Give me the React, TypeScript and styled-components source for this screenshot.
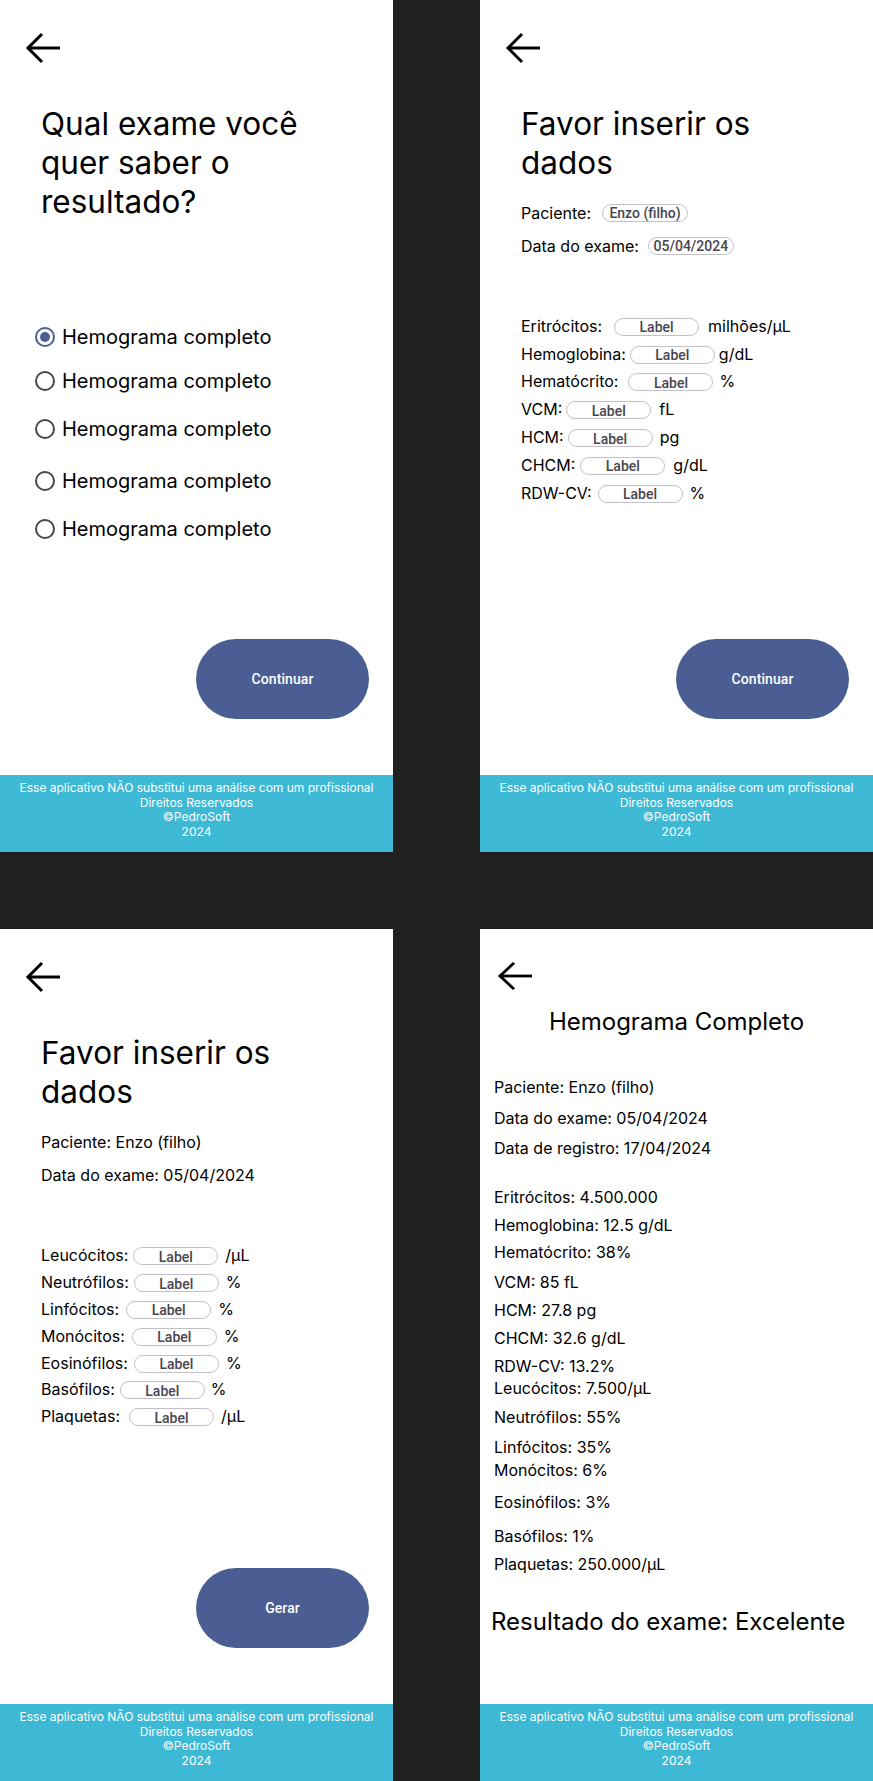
import React from "react";
import styled, { createGlobalStyle } from "styled-components";

const GlobalStyle = createGlobalStyle`
  html, body {
    margin: 0;
    padding: 0;
    background: #202020;
  }
  body {
    font-family: Inter, "Noto Sans", sans-serif;
    -webkit-font-smoothing: antialiased;
  }
  * { box-sizing: border-box; }
`;

const Board = styled.div`
  display: grid;
  grid-template-columns: 393px 393px;
  grid-template-rows: 852px 852px;
  column-gap: 87px;
  row-gap: 77px;
  width: 873px;
  background: #202020;
`;

const Screen = styled.section`
  display: flex;
  flex-direction: column;
  background: #ffffff;
  color: #000000;
  overflow: hidden;
`;

const BackButton = styled.button<{ $left: number }>`
  display: block;
  align-self: flex-start;
  margin: 32px 0 0 ${(p) => p.$left}px;
  padding: 0;
  border: 0;
  background: none;
  line-height: 0;
  cursor: pointer;
`;

const Title = styled.h1`
  margin: 40px 0 0;
  padding-left: 41px;
  max-width: 341px;
  font-size: 31.5px;
  line-height: 39px;
  font-weight: 400;
`;

const CenterTitle = styled.h1`
  margin: 16px 0 0;
  text-align: center;
  font-size: 24px;
  line-height: 30px;
  font-weight: 400;
`;

const RadioList = styled.div`
  display: flex;
  flex-direction: column;
  margin-top: 104px;
  padding-left: 35px;
`;

const RadioRow = styled.label<{ $mt: number }>`
  display: flex;
  align-items: center;
  gap: 7px;
  height: 24px;
  margin-top: ${(p) => p.$mt}px;
  font-size: 20px;
  line-height: 24px;
  cursor: pointer;
`;

const RadioInput = styled.input`
  appearance: none;
  -webkit-appearance: none;
  margin: 0;
  width: 20px;
  height: 20px;
  border-radius: 50%;
  border: 2px solid #49454f;
  display: grid;
  place-items: center;
  flex: none;
  &:checked {
    border-color: #4a5e93;
  }
  &:checked::after {
    content: "";
    width: 10px;
    height: 10px;
    border-radius: 50%;
    background: #4a5e93;
  }
`;

const PrimaryButton = styled.button`
  align-self: flex-end;
  margin: auto 24px 56px 0;
  width: 173px;
  height: 80px;
  flex: none;
  border: 0;
  border-radius: 40px;
  background: #4a5e93;
  color: #ffffff;
  font-family: Roboto, Inter, sans-serif;
  font-size: 14px;
  font-weight: 500;
  letter-spacing: 0.1px;
  cursor: pointer;
`;

const MetaList = styled.div`
  display: flex;
  flex-direction: column;
  gap: 9px;
  margin-top: 19px;
  padding-left: 41px;
`;

const MetaRow = styled.div<{ $gap?: number }>`
  display: flex;
  align-items: center;
  gap: ${(p) => p.$gap ?? 0}px;
  height: 24px;
  font-size: 16px;
  line-height: 24px;
`;

const Chip = styled.span`
  display: inline-flex;
  align-items: center;
  justify-content: center;
  width: 86px;
  height: 18px;
  border: 1px solid #c4c0cb;
  border-radius: 9px;
  font-family: Roboto, Inter, sans-serif;
  font-size: 14px;
  font-weight: 500;
  color: #49454f;
  line-height: 16px;
`;

const FieldList = styled.div<{ $mt: number }>`
  display: flex;
  flex-direction: column;
  margin-top: ${(p) => p.$mt}px;
  padding-left: 41px;
`;

const FieldRow = styled.div<{ $h: number }>`
  display: flex;
  align-items: center;
  height: ${(p) => p.$h}px;
  font-size: 16px;
`;

const FieldName = styled.span<{ $gap: number }>`
  margin-right: ${(p) => p.$gap}px;
`;

const FieldInput = styled.input<{ $gap: number }>`
  width: 85px;
  height: 18px;
  margin: 2px ${(p) => p.$gap}px 0 0;
  padding: 1px 0 0;
  border: 1px solid #c4c0cb;
  border-radius: 9px;
  background: #ffffff;
  text-align: center;
  font-family: Roboto, Inter, sans-serif;
  font-size: 14px;
  font-weight: 500;
  color: #49454f;
  outline: none;
  &::placeholder {
    color: #49454f;
    opacity: 1;
  }
`;

const ResultList = styled.div`
  display: flex;
  flex-direction: column;
  padding-left: 14px;
`;

const ResultLine = styled.p<{ $mt: number }>`
  margin: ${(p) => p.$mt}px 0 0;
  font-size: 16px;
  line-height: 20px;
`;

const Verdict = styled.p`
  margin: 33px 0 0;
  padding-left: 11px;
  font-size: 24px;
  line-height: 30px;
`;

const Footer = styled.footer`
  flex: none;
  height: 77px;
  padding-top: 6px;
  background: #3db9d5;
  color: #ffffff;
  text-align: center;
  font-size: 12px;
  line-height: 14.5px;
`;

const FooterLine = styled.div``;

const Spacer = styled.div`
  flex: 1;
`;

function ArrowBack({ h = 32 }: { h?: number }) {
  return (
    <svg width={36} height={h} viewBox="0 0 36 32" preserveAspectRatio="none" fill="none">
      <path d="M35 16H3" stroke="#000" strokeWidth={3} />
      <path d="M17 2L3 16L17 30" stroke="#000" strokeWidth={3} />
    </svg>
  );
}

function AppFooter() {
  return (
    <Footer>
      <FooterLine>Esse aplicativo NÃO substitui uma análise com um profissional</FooterLine>
      <FooterLine>Direitos Reservados</FooterLine>
      <FooterLine>©PedroSoft</FooterLine>
      <FooterLine>2024</FooterLine>
    </Footer>
  );
}

const radioMargins = [0, 20, 24, 28, 24];

type Field = { name: string; unit: string; lg: number; ug: number };

const redFields: Field[] = [
  { name: "Eritrócitos:", unit: "milhões/µL", lg: 12, ug: 9 },
  { name: "Hemoglobina:", unit: "g/dL", lg: 4, ug: 4 },
  { name: "Hematócrito:", unit: "%", lg: 10, ug: 6 },
  { name: "VCM:", unit: "fL", lg: 4, ug: 8 },
  { name: "HCM:", unit: "pg", lg: 4, ug: 7 },
  { name: "CHCM:", unit: "g/dL", lg: 5, ug: 8 },
  { name: "RDW-CV:", unit: "%", lg: 6, ug: 7 },
];

const whiteFields: Field[] = [
  { name: "Leucócitos:", unit: "/µL", lg: 5, ug: 7 },
  { name: "Neutrófilos:", unit: "%", lg: 5, ug: 7 },
  { name: "Linfócitos:", unit: "%", lg: 7, ug: 7 },
  { name: "Monócitos:", unit: "%", lg: 7, ug: 7 },
  { name: "Eosinófilos:", unit: "%", lg: 6, ug: 7 },
  { name: "Basófilos:", unit: "%", lg: 5, ug: 6 },
  { name: "Plaquetas:", unit: "/µL", lg: 9, ug: 7 },
];

const infoLines = [
  { text: "Paciente: Enzo (filho)", mt: 40 },
  { text: "Data do exame: 05/04/2024", mt: 11 },
  { text: "Data de registro: 17/04/2024", mt: 10 },
];

const resultLines = [
  { text: "Eritrócitos: 4.500.000", mt: 29 },
  { text: "Hemoglobina: 12.5 g/dL", mt: 8 },
  { text: "Hematócrito: 38%", mt: 7 },
  { text: "VCM: 85 fL", mt: 10 },
  { text: "HCM: 27.8 pg", mt: 8 },
  { text: "CHCM: 32.6 g/dL", mt: 8 },
  { text: "RDW-CV: 13.2%", mt: 8 },
  { text: "Leucócitos: 7.500/µL", mt: 2 },
  { text: "Neutrófilos: 55%", mt: 9 },
  { text: "Linfócitos: 35%", mt: 10 },
  { text: "Monócitos: 6%", mt: 3 },
  { text: "Eosinófilos: 3%", mt: 12 },
  { text: "Basófilos: 1%", mt: 14 },
  { text: "Plaquetas: 250.000/µL", mt: 8 },
];

function Fields({ items, pitch, mt }: { items: Field[]; pitch: number; mt: number }) {
  return (
    <FieldList $mt={mt}>
      {items.map((f) => (
        <FieldRow key={f.name} $h={pitch}>
          <FieldName $gap={f.lg}>{f.name}</FieldName>
          <FieldInput $gap={f.ug} placeholder="Label" aria-label={f.name} />
          <span>{f.unit}</span>
        </FieldRow>
      ))}
    </FieldList>
  );
}

export default function App() {
  return (
    <>
      <GlobalStyle />
      <Board>
        <Screen>
          <BackButton $left={25} aria-label="Voltar">
            <ArrowBack />
          </BackButton>
          <Title>Qual exame você quer saber o resultado?</Title>
          <RadioList>
            {radioMargins.map((mt, i) => (
              <RadioRow key={i} $mt={mt}>
                <RadioInput type="radio" name="exame" defaultChecked={i === 0} />
                Hemograma completo
              </RadioRow>
            ))}
          </RadioList>
          <PrimaryButton>Continuar</PrimaryButton>
          <AppFooter />
        </Screen>

        <Screen>
          <BackButton $left={25} aria-label="Voltar">
            <ArrowBack />
          </BackButton>
          <Title>Favor inserir os dados</Title>
          <MetaList>
            <MetaRow $gap={11}>
              Paciente:<Chip>Enzo (filho)</Chip>
            </MetaRow>
            <MetaRow $gap={9}>
              Data do exame:<Chip>05/04/2024</Chip>
            </MetaRow>
          </MetaList>
          <Fields items={redFields} pitch={27.8} mt={54} />
          <PrimaryButton>Continuar</PrimaryButton>
          <AppFooter />
        </Screen>

        <Screen>
          <BackButton $left={25} aria-label="Voltar">
            <ArrowBack />
          </BackButton>
          <Title>Favor inserir os dados</Title>
          <MetaList>
            <MetaRow>Paciente: Enzo (filho)</MetaRow>
            <MetaRow>Data do exame: 05/04/2024</MetaRow>
          </MetaList>
          <Fields items={whiteFields} pitch={26.8} mt={55} />
          <PrimaryButton>Gerar</PrimaryButton>
          <AppFooter />
        </Screen>

        <Screen>
          <BackButton $left={17} aria-label="Voltar">
            <ArrowBack h={30} />
          </BackButton>
          <CenterTitle>Hemograma Completo</CenterTitle>
          <ResultList>
            {infoLines.map((l) => (
              <ResultLine key={l.text} $mt={l.mt}>
                {l.text}
              </ResultLine>
            ))}
            {resultLines.map((l) => (
              <ResultLine key={l.text} $mt={l.mt}>
                {l.text}
              </ResultLine>
            ))}
          </ResultList>
          <Verdict>Resultado do exame: Excelente</Verdict>
          <Spacer />
          <AppFooter />
        </Screen>
      </Board>
    </>
  );
}
